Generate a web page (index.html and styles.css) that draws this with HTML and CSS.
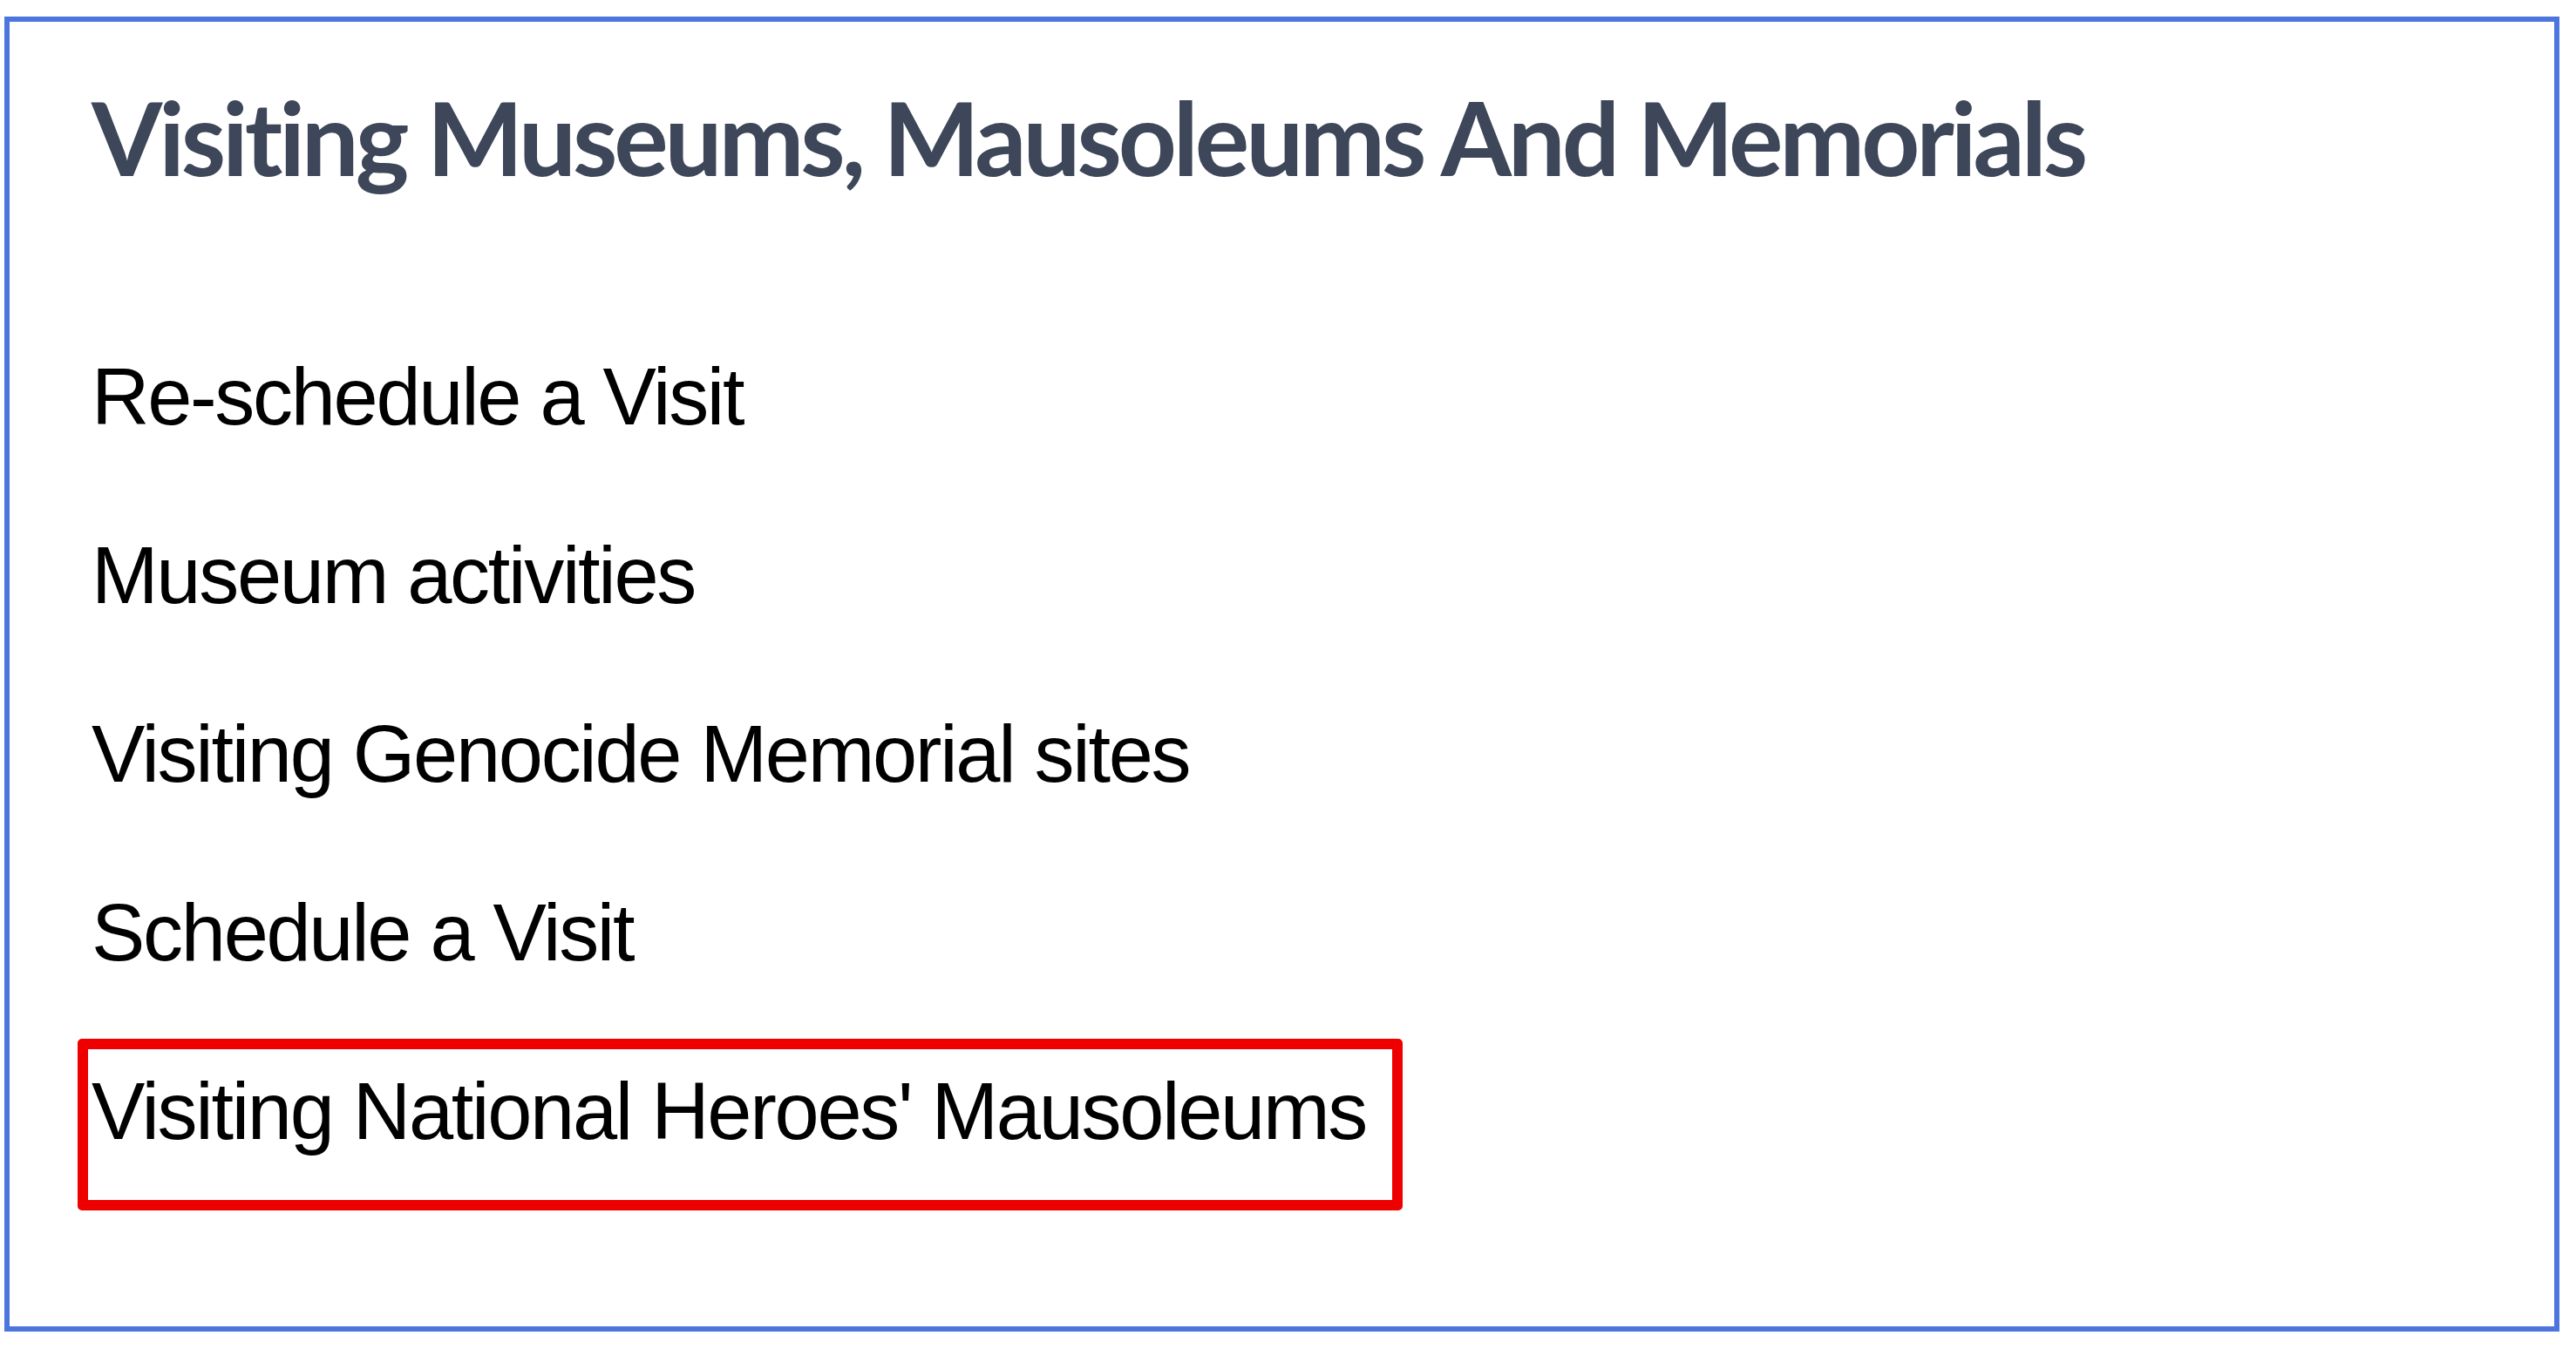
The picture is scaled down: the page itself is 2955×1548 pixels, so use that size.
FILE: index.html
```html
<!DOCTYPE html>
<html lang="en">
<head>
<meta charset="utf-8">
<title>Visiting Museums, Mausoleums And Memorials</title>
<link rel="stylesheet" href="styles.css">
</head>
<body>
<section class="card">
  <h1 class="card-title">Visiting Museums, Mausoleums And Memorials</h1>
  <ul class="links">
    <li class="link-item">Re-schedule a Visit</li>
    <li class="link-item">Museum activities</li>
    <li class="link-item">Visiting Genocide Memorial sites</li>
    <li class="link-item">Schedule a Visit</li>
    <li class="link-item link-item--highlight">Visiting National Heroes' Mausoleums</li>
  </ul>
</section>
</body>
</html>
```

FILE: styles.css
```css
html, body {
  margin: 0;
  padding: 0;
  background: #ffffff;
}

.card {
  box-sizing: border-box;
  margin: 19px 0 0 5px;
  width: 2931px;
  height: 1509px;
  border: 6px solid #4c76dd;
  padding: 74px 0 0 94px;
}

.card-title {
  margin: 0;
  font-family: Lato, "Noto Sans", sans-serif;
  font-weight: 700;
  font-size: 117px;
  line-height: 117px;
  color: #3d4759;
  letter-spacing: -4.1px;
  white-space: nowrap;
}

.links {
  list-style: none;
  margin: 137px 0 0 0;
  padding: 0;
}

.link-item {
  font-family: "Liberation Sans", Arial, sans-serif;
  font-size: 92px;
  line-height: 205px;
  height: 205px;
  color: #000000;
  letter-spacing: -2.3px;
  white-space: nowrap;
}

.link-item--highlight {
  position: relative;
}

.link-item--highlight::after {
  content: "";
  position: absolute;
  left: -16px;
  top: 19px;
  width: 1520px;
  height: 197px;
  box-sizing: border-box;
  border: 12px solid #ee0000;
  border-radius: 5px;
}
```
